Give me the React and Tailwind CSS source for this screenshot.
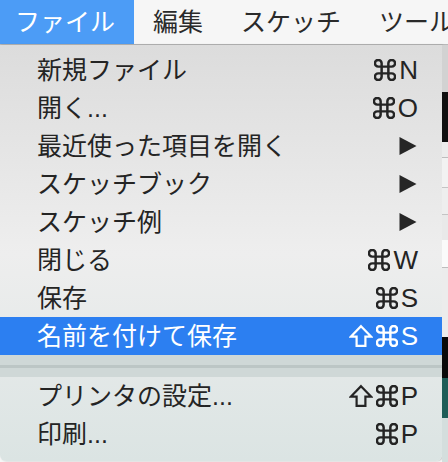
import React from "react";

const font = { fontFamily: '"Liberation Sans", "Noto Sans CJK JP", sans-serif' };

const items = [
  { label: "新規ファイル", keys: "N" },
  { label: "開く...", keys: "O" },
  { label: "最近使った項目を開く", sub: true },
  { label: "スケッチブック", sub: true },
  { label: "スケッチ例", sub: true },
  { label: "閉じる", keys: "W" },
  { label: "保存", keys: "S" },
  { label: "名前を付けて保存", keys: "S", shift: true, active: true },
];

const items2 = [
  { label: "プリンタの設定...", keys: "P", shift: true },
  { label: "印刷...", keys: "P" },
];

function Shift({ color }) {
  return (
    <svg width="24" height="24" viewBox="0 0 24 24" className="mr-[3px]">
      <path
        d="M12 2.2 L22 12.6 H16.4 V21.8 H7.6 V12.6 H2 Z"
        fill="none"
        stroke={color}
        strokeWidth="2.2"
        strokeLinejoin="miter"
      />
    </svg>
  );
}

function Cmd({ color }) {
  return (
    <svg width="22" height="22" viewBox="2.2 2.2 19.6 19.6" className="mr-[3px]">
      <path
        d="M15 6v12a3 3 0 1 0 3-3H6a3 3 0 1 0 3 3V6a3 3 0 1 0-3 3h12a3 3 0 1 0-3-3"
        fill="none"
        stroke={color}
        strokeWidth="2.2"
      />
    </svg>
  );
}

function Arrow() {
  return (
    <svg width="18" height="18" viewBox="0 0 18 18" className="mr-[1px]">
      <path d="M0.5 0 L17.5 9 L0.5 18 Z" fill="#262626" />
    </svg>
  );
}

function Row({ item }) {
  const color = item.active ? "#ffffff" : "#242424";
  return (
    <div
      className={`h-[38px] flex items-center justify-between pl-[37px] pr-[24px] ${
        item.active ? "bg-[#2c7ff1] text-white" : "text-[#242424]"
      }`}
    >
      <span className="text-[25px] leading-none whitespace-nowrap">{item.label}</span>
      {item.sub ? (
        <Arrow />
      ) : (
        <span className="flex items-center text-[26px] leading-none">
          {item.shift && <Shift color={color} />}
          <Cmd color={color} />
          <span>{item.keys}</span>
        </span>
      )}
    </div>
  );
}

export default function App() {
  return (
    <div className="w-[448px] h-[462px] overflow-hidden bg-[#f6f6f6] flex flex-col" style={font}>
      {/* menu bar */}
      <div className="h-[45px] shrink-0 flex items-stretch border-b border-[#b9b9b9] text-[25px] leading-none text-[#2a2a2a] whitespace-nowrap">
        <div className="shrink-0 bg-[#4c9cf6] text-white pl-[15px] pr-[19px] flex items-center">ファイル</div>
        <div className="shrink-0 px-[19px] flex items-center">編集</div>
        <div className="shrink-0 px-[19px] flex items-center">スケッチ</div>
        <div className="shrink-0 px-[19px] flex items-center">ツール</div>
      </div>

      <div className="flex flex-1">
        {/* dropdown */}
        <div className="w-[442px] shrink-0 h-[416px] rounded-b-[6px] py-[6px] bg-gradient-to-b from-[#dcdcdc] via-[#eeeeee] to-[#dbe4e3] shadow-[1px_0_2px_rgba(0,0,0,0.25)]">
          {items.map((it) => (
            <Row key={it.label} item={it} />
          ))}
          <div className="bg-[#cfd8d7] pt-[10px] pb-[9px]">
            <div className="h-[3px] bg-[#bcc6c5]" />
          </div>
          {items2.map((it) => (
            <Row key={it.label} item={it} />
          ))}
        </div>

        {/* app behind the menu */}
        <div className="flex-1 flex flex-col">
          <div className="h-[47px] bg-[#d2d2d2]" />
          <div className="h-[50px] bg-[#101010]" />
          <div className="h-[16px] bg-[#ececec] border-b border-[#bdbdbd]" />
          <div className="h-[30px] bg-[#f2f2f2] border-b border-[#c4c4c4]" />
          <div className="h-[27px] bg-[#eeeeee] border-b border-[#c4c4c4]" />
          <div className="h-[25px] bg-[#e9e9e9]" />
          <div className="h-[28px] bg-[#fafafa] border-b border-[#bdbdbd]" />
          <div className="h-[69px] bg-[#ececec]" />
          <div className="h-[41px] bg-[#0a0a0a]" />
          <div className="h-[40px] bg-[#1f5d58]" />
          <div className="flex-1 bg-[#d4dedd]" />
        </div>
      </div>
    </div>
  );
}
